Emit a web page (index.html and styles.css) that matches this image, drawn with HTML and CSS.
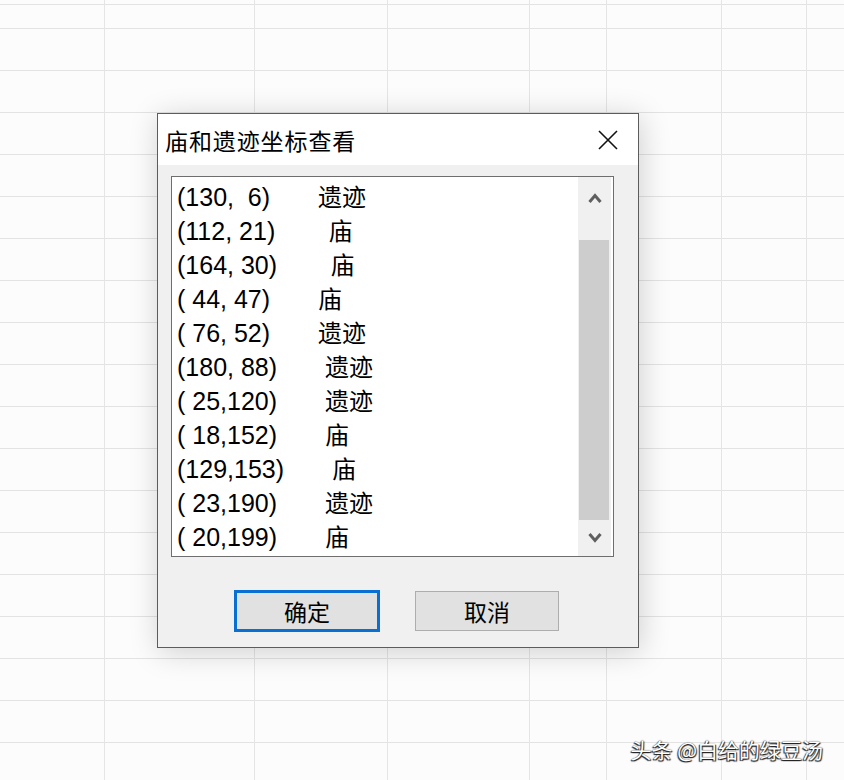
FILE: index.html
```html
<!DOCTYPE html>
<html lang="zh-CN">
<head>
<meta charset="utf-8">
<title>庙和遗迹坐标查看</title>
<link rel="stylesheet" href="styles.css">
</head>
<body>
<div class="sheet">
  <div class="cols">
    <div class="col c1"></div>
    <div class="col c2"></div>
    <div class="col c3"></div>
    <div class="col c4"></div>
    <div class="col c5"></div>
    <div class="col c6"></div>
    <div class="col c7"></div>
  </div>

  <div class="dialog">
    <div class="titlebar">
      <span class="title">庙和遗迹坐标查看</span>
      <span class="close">
        <svg width="20" height="20" viewBox="0 0 20 20"><path d="M1 1 L19 19 M19 1 L1 19" stroke="#111" stroke-width="1.6" fill="none"/></svg>
      </span>
    </div>
    <div class="body">
      <div class="listbox">
        <div class="items">
          <div class="row"><span class="coord">(130,&nbsp;&nbsp;6)</span><span class="kind">遗迹</span></div>
          <div class="row"><span class="coord">(112, 21)</span><span class="kind">&nbsp;庙</span></div>
          <div class="row"><span class="coord">(164, 30)</span><span class="kind">&nbsp;庙</span></div>
          <div class="row"><span class="coord">(&nbsp;44, 47)</span><span class="kind">庙</span></div>
          <div class="row"><span class="coord">(&nbsp;76, 52)</span><span class="kind">遗迹</span></div>
          <div class="row"><span class="coord">(180, 88)</span><span class="kind">遗迹</span></div>
          <div class="row"><span class="coord">(&nbsp;25,120)</span><span class="kind">遗迹</span></div>
          <div class="row"><span class="coord">(&nbsp;18,152)</span><span class="kind">庙</span></div>
          <div class="row"><span class="coord">(129,153)</span><span class="kind">庙</span></div>
          <div class="row"><span class="coord">(&nbsp;23,190)</span><span class="kind">遗迹</span></div>
          <div class="row"><span class="coord">(&nbsp;20,199)</span><span class="kind">庙</span></div>
        </div>
        <div class="scrollbar">
          <div class="arrow up">
            <svg width="14" height="12" viewBox="0 0 14 12"><path d="M1.5 10 L7 3.5 L12.5 10" stroke="#5f5f5f" stroke-width="3" fill="none" stroke-linejoin="miter"/></svg>
          </div>
          <div class="track-gap"></div>
          <div class="thumb"></div>
          <div class="arrow down">
            <svg width="14" height="12" viewBox="0 0 14 12"><path d="M1.5 2 L7 8.5 L12.5 2" stroke="#5f5f5f" stroke-width="3" fill="none" stroke-linejoin="miter"/></svg>
          </div>
        </div>
      </div>
      <div class="buttons">
        <div class="btn default">确定</div>
        <div class="btn cancel">取消</div>
      </div>
    </div>
  </div>

  <div class="watermark">头条 @白给的绿豆汤</div>
</div>
</body>
</html>
```

FILE: styles.css
```css
html, body {
  margin: 0;
  padding: 0;
}
body {
  width: 844px;
  height: 780px;
  overflow: hidden;
  font-family: "Liberation Sans", "Noto Sans CJK SC", sans-serif;
}
.sheet {
  position: relative;
  width: 844px;
  height: 780px;
  background-color: #fdfcfd;
  background-image: repeating-linear-gradient(to bottom, #e4e3e4 0, #e4e3e4 1px, transparent 1px, transparent 42px);
  background-position: 0 28px;
}
.cols {
  display: flex;
  height: 780px;
}
.col {
  box-sizing: border-box;
  height: 100%;
  border-right: 1px solid #e6e5e6;
}
.c1 { width: 105px; }
.c2 { width: 150px; }
.c3 { width: 133px; }
.c4 { width: 142px; }
.c5 { width: 77px; }
.c6 { width: 115px; }
.c7 { width: 85px; }

.dialog {
  position: absolute;
  left: 157px;
  top: 113px;
  width: 482px;
  height: 535px;
  box-sizing: border-box;
  border: 1px solid #5c5c5c;
  background: #f0f0f0;
  box-shadow: 2px 4px 28px rgba(0, 0, 0, 0.18);
  display: flex;
  flex-direction: column;
}
.titlebar {
  height: 51px;
  background: #ffffff;
  display: flex;
  align-items: center;
  justify-content: space-between;
  padding: 0 20px 0 7px;
}
.title {
  font-family: "Noto Sans CJK SC", sans-serif;
  font-size: 23px;
  letter-spacing: 0.9px;
  color: #000;
  line-height: 1;
  margin-top: 1px;
}
.close {
  display: flex;
  width: 20px;
  height: 20px;
}
.body {
  flex: 1;
  padding: 11px 0 0 13px;
}
.listbox {
  box-sizing: border-box;
  width: 443px;
  height: 381px;
  border: 1px solid #6e6e6e;
  background: #ffffff;
  display: flex;
  overflow: hidden;
}
.items {
  flex: 1;
  padding: 2px 0 0 5px;
}
.row {
  height: 34px;
  line-height: 34px;
  font-size: 25px;
  color: #000;
  white-space: pre;
}
.kind {
  margin-left: 48px;
  font-family: "Noto Sans CJK SC", sans-serif;
  font-size: 24px;
}
.scrollbar {
  width: 33px;
  margin-right: 2px;
  background: #f0f0f0;
  display: flex;
  flex-direction: column;
}
.arrow {
  display: flex;
  justify-content: center;
  align-items: center;
}
.arrow.up { height: 42px; }
.track-gap { height: 21px; }
.thumb {
  height: 280px;
  margin: 0 2px 0 1px;
  background: #cdcdcd;
}
.arrow.down { height: 36px; }

.buttons {
  display: flex;
  align-items: flex-start;
  gap: 35px;
  margin-top: 33px;
  padding-left: 63px;
}
.btn {
  box-sizing: border-box;
  width: 146px;
  height: 42px;
  background: #e1e1e1;
  display: flex;
  align-items: center;
  justify-content: center;
  font-family: "Noto Sans CJK SC", sans-serif;
  font-size: 23px;
  color: #000;
  line-height: 1;
}
.btn.default {
  border: 3px solid #0a6fd2;
}
.btn.cancel {
  width: 144px;
  height: 40px;
  margin-top: 1px;
  border: 1px solid #adadad;
}

.watermark {
  position: absolute;
  right: 21px;
  top: 737px;
  font-family: "Noto Sans CJK SC", sans-serif;
  font-size: 21px;
  line-height: 24px;
  color: #ffffff;
  text-shadow: -1px 1px 1px #222, 1px 1px 1px #222, 0 0 1px #333;
}
```
